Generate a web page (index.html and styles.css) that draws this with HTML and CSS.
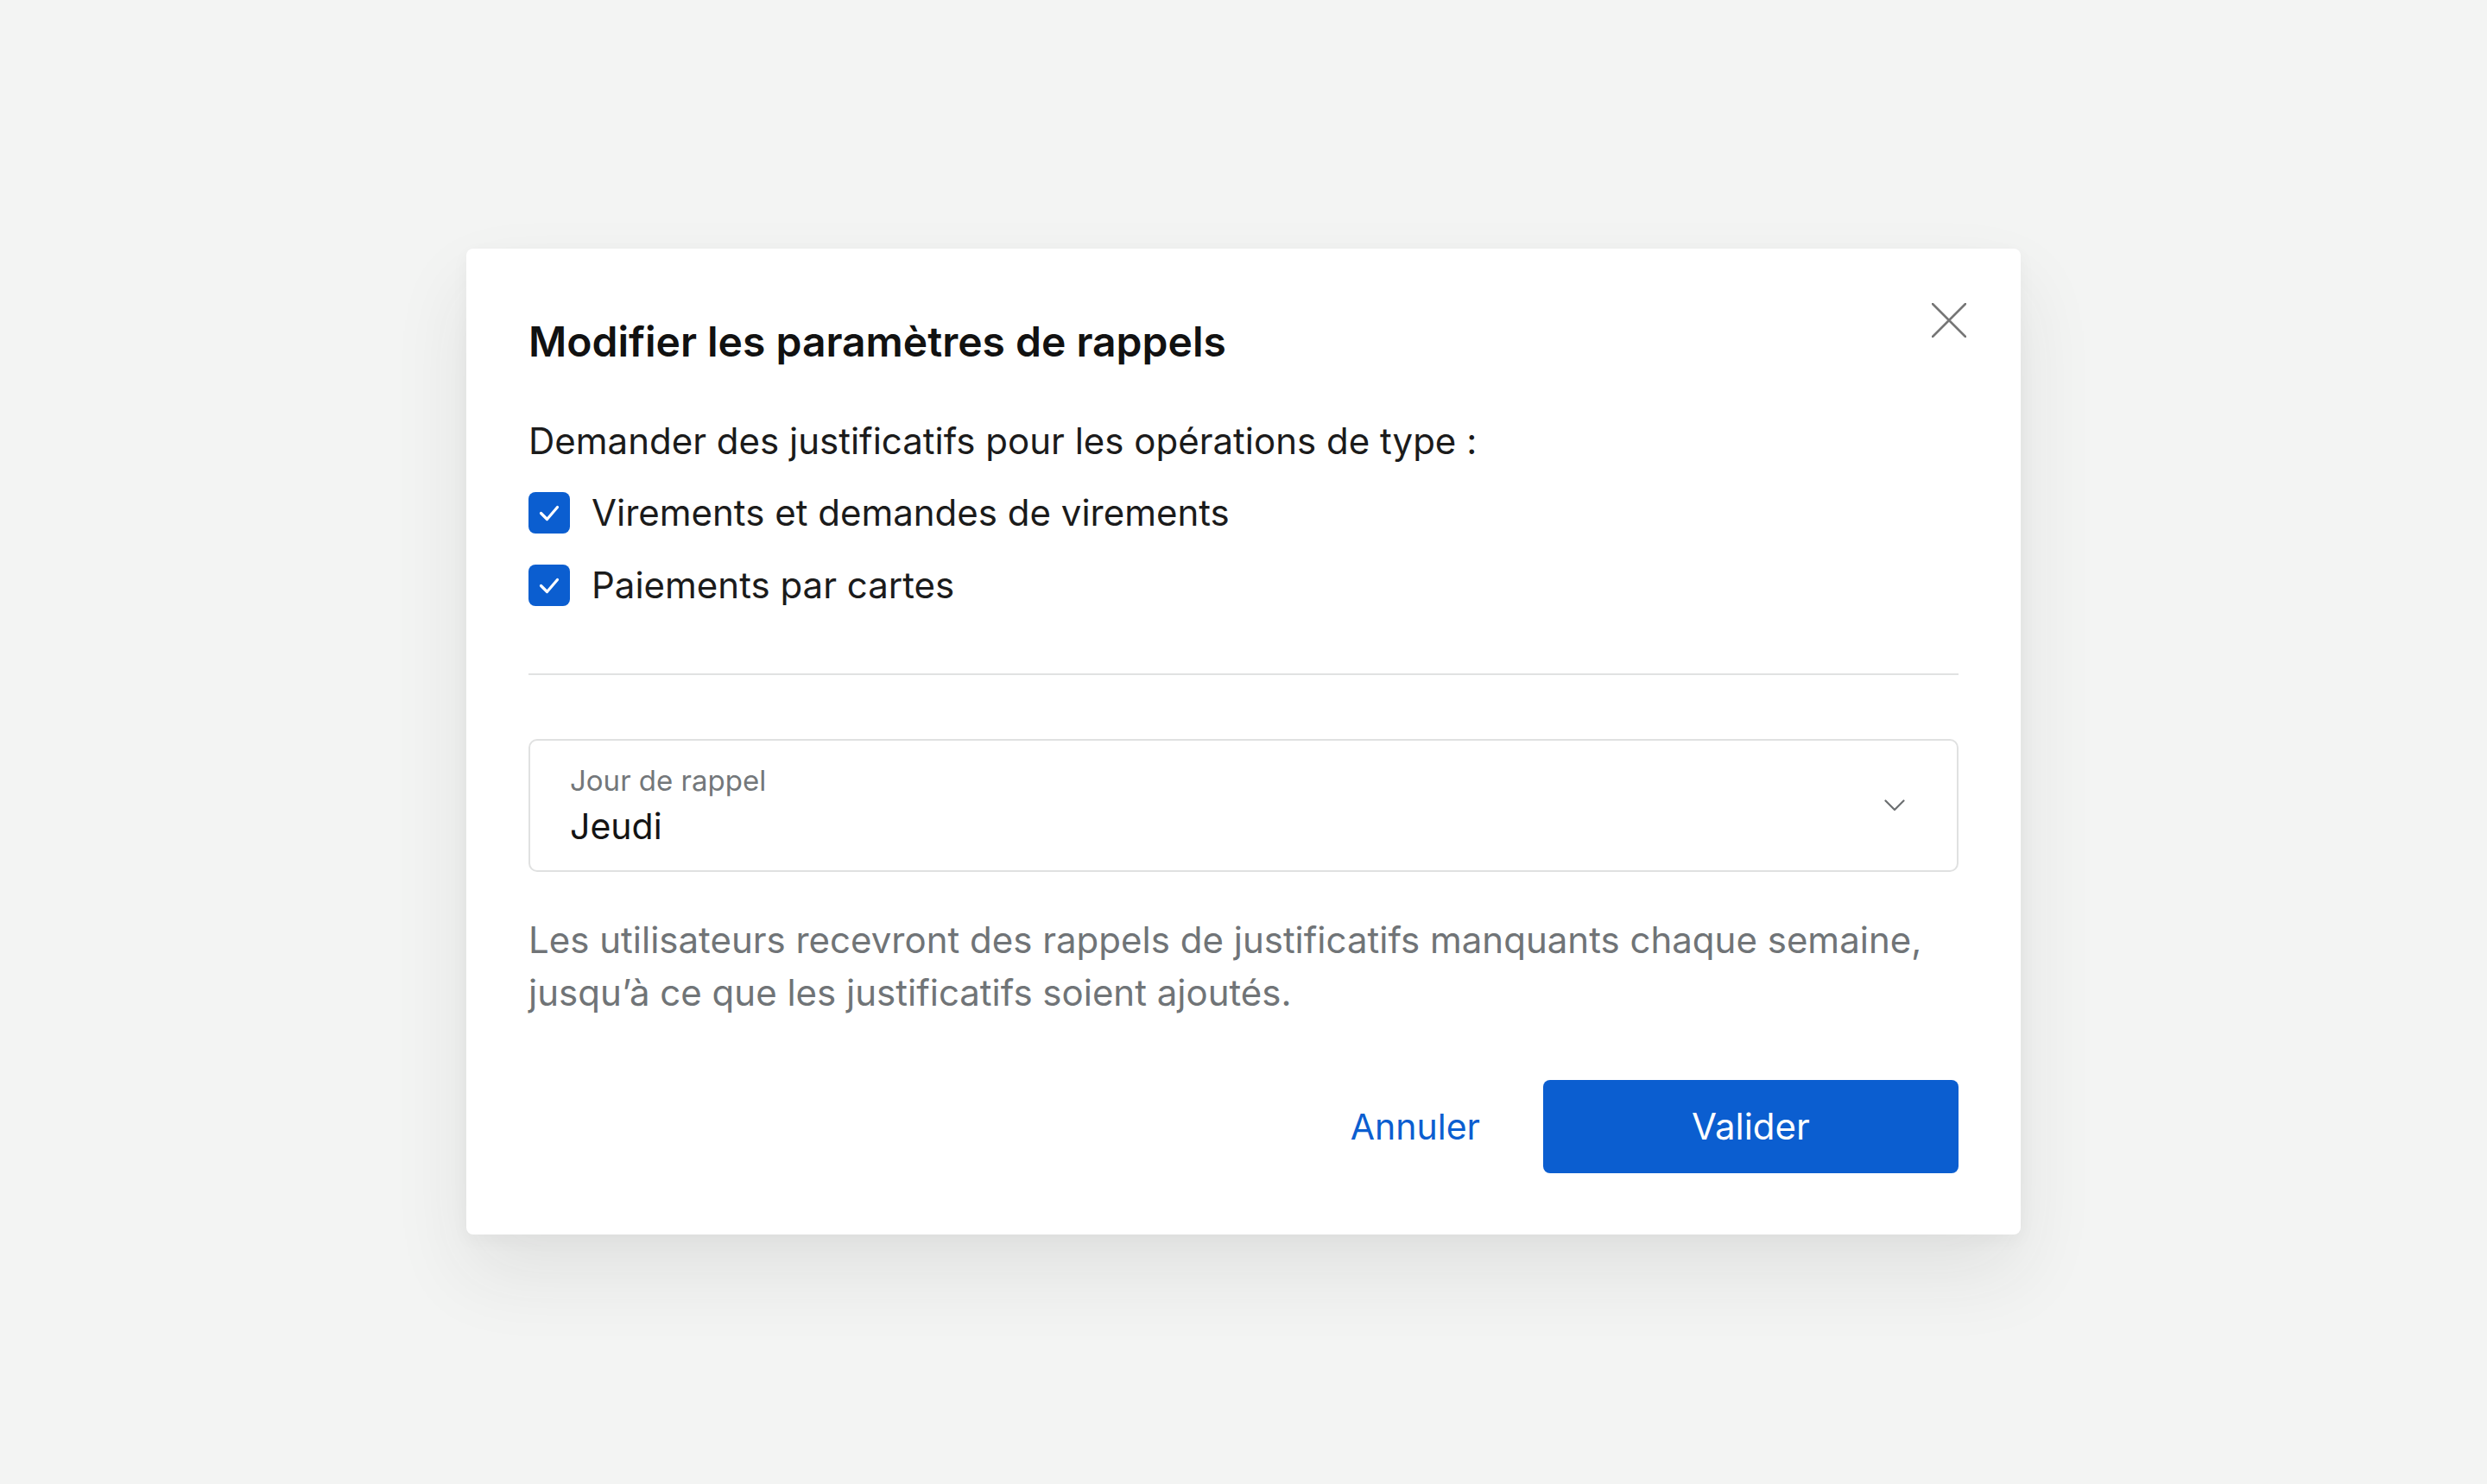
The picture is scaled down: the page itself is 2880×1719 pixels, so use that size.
FILE: index.html
```html
<!DOCTYPE html>
<html lang="fr">
<head>
<meta charset="utf-8">
<title>Modifier les paramètres de rappels</title>
<link rel="stylesheet" href="styles.css">
</head>
<body>
<div class="page">
  <div class="modal" role="dialog">
    <button class="close" aria-label="Fermer">
      <svg viewBox="0 0 40 40" width="40" height="40"><path d="M1 1 L39 39 M39 1 L1 39" stroke="#767676" stroke-width="2.6" fill="none" stroke-linecap="round"/></svg>
    </button>
    <h1 class="title">Modifier les paramètres de rappels</h1>
    <p class="intro">Demander des justificatifs pour les opérations de type :</p>
    <ul class="checks">
      <li class="check-row">
        <span class="box"><svg viewBox="0 0 48 48" width="48" height="48"><path d="M14.5 24.5 L21.5 31.5 L33.5 17.5" stroke="#fff" stroke-width="3.2" fill="none" stroke-linecap="round" stroke-linejoin="round"/></svg></span>
        <span class="check-label">Virements et demandes de virements</span>
      </li>
      <li class="check-row">
        <span class="box"><svg viewBox="0 0 48 48" width="48" height="48"><path d="M14.5 24.5 L21.5 31.5 L33.5 17.5" stroke="#fff" stroke-width="3.2" fill="none" stroke-linecap="round" stroke-linejoin="round"/></svg></span>
        <span class="check-label">Paiements par cartes</span>
      </li>
    </ul>
    <hr class="sep">
    <div class="select">
      <div class="select-text">
        <span class="select-label">Jour de rappel</span>
        <span class="select-value">Jeudi</span>
      </div>
      <svg class="chevron" viewBox="0 0 24 14" width="24" height="14"><path d="M1.5 1.5 L12 12 L22.5 1.5" stroke="#6c6f71" stroke-width="2.2" fill="none" stroke-linecap="round" stroke-linejoin="round"/></svg>
    </div>
    <p class="help">Les utilisateurs recevront des rappels de justificatifs manquants chaque semaine, jusqu’à ce que les justificatifs soient ajoutés.</p>
    <div class="actions">
      <button class="btn-link">Annuler</button>
      <button class="btn-primary">Valider</button>
    </div>
  </div>
</div>
</body>
</html>
```

FILE: styles.css
```css
* { box-sizing: border-box; }
html, body { margin: 0; padding: 0; }
body {
  background: #f3f4f3;
  font-family: Inter, "Noto Sans", "Liberation Sans", sans-serif;
  color: #1b1b1b;
  width: 2880px;
  height: 1719px;
  overflow: hidden;
}
.page {
  padding-top: 288px;
  padding-left: 540px;
}
.modal {
  position: relative;
  width: 1800px;
  background: #fff;
  border-radius: 8px;
  padding: 72px 72px 71px 72px;
  box-shadow: 0 44px 90px rgba(40, 45, 45, 0.09), 0 6px 20px rgba(40, 45, 45, 0.04);
}
.close {
  position: absolute;
  top: 55px;
  right: 55px;
  width: 56px;
  height: 56px;
  padding: 0;
  border: 0;
  background: none;
  display: flex;
  align-items: center;
  justify-content: center;
}
.title {
  margin: 0;
  font-size: 48px;
  line-height: 72px;
  font-weight: 600;
  color: #111;
}
.intro {
  margin: 51px 0 0;
  font-size: 42px;
  line-height: 56px;
  color: #1b1b1b;
}
.checks {
  list-style: none;
  margin: 27px 0 0;
  padding: 0;
  display: flex;
  flex-direction: column;
  gap: 28px;
}
.check-row {
  display: flex;
  align-items: center;
  gap: 25px;
  height: 56px;
}
.box {
  width: 48px;
  height: 48px;
  border-radius: 8px;
  background: #0b5ed0;
  display: flex;
}
.check-label {
  font-size: 42px;
  line-height: 56px;
  color: #1b1b1b;
}
.sep {
  margin: 74px 0 0;
  border: 0;
  height: 2px;
  background: #e1e2e2;
}
.select {
  margin-top: 74px;
  height: 154px;
  border: 2px solid #e0e1e1;
  border-radius: 10px;
  padding: 26px 60px 23px 46px;
  display: flex;
  align-items: center;
  justify-content: space-between;
}
.select-text {
  display: flex;
  flex-direction: column;
  gap: 5px;
}
.select-label {
  font-size: 33px;
  line-height: 40px;
  color: #73777a;
}
.select-value {
  font-size: 41px;
  line-height: 56px;
  color: #141414;
}
.chevron {
  margin-top: -4px;
}
.help {
  margin: 48px 0 0;
  font-size: 42px;
  line-height: 61px;
  color: #707477;
}
.actions {
  margin-top: 71px;
  display: flex;
  justify-content: flex-end;
  align-items: center;
  gap: 73px;
}
.btn-link {
  border: 0;
  background: none;
  padding: 0;
  font-family: inherit;
  font-size: 41px;
  line-height: 56px;
  color: #0b5ed0;
}
.btn-primary {
  width: 481px;
  height: 108px;
  border: 0;
  border-radius: 8px;
  background: #0b5ed0;
  color: #fff;
  font-family: inherit;
  font-size: 42px;
  line-height: 56px;
}
```
